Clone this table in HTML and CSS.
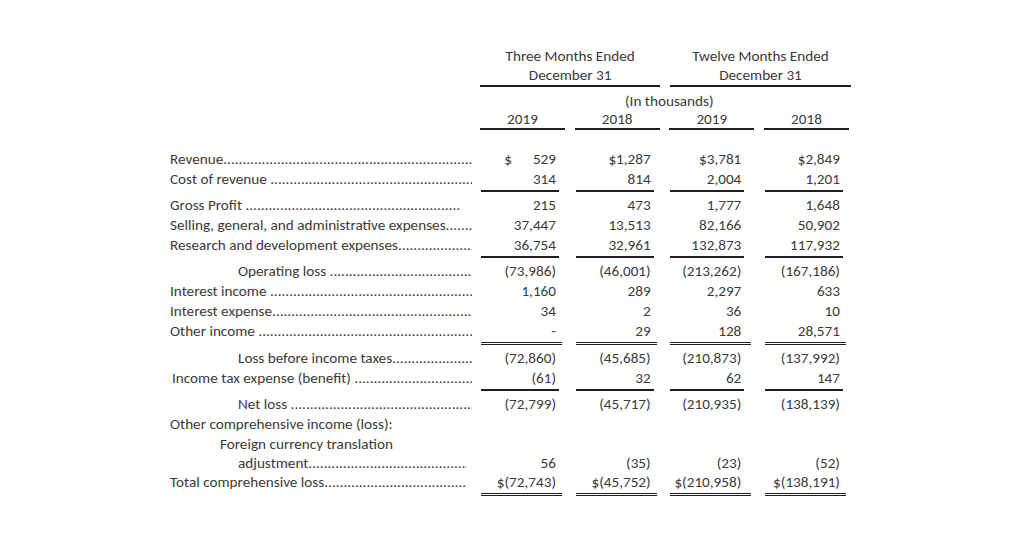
FILE: index.html
```html
<!DOCTYPE html>
<html>
<head>
<meta charset="utf-8">
<link rel="stylesheet" href="styles.css">
</head>
<body>
<div class="sheet">
  <div class="row head1">
    <div class="lab"></div>
    <div class="grp g1">Three Months Ended<br>December 31</div>
    <div class="grp g2">Twelve Months Ended<br>December 31</div>
  </div>
  <div class="row head2">
    <div class="lab"></div>
    <div class="units">(In thousands)</div>
  </div>
  <div class="row head3">
    <div class="lab"></div>
    <div class="yr">2019</div>
    <div class="yr">2018</div>
    <div class="yr">2019</div>
    <div class="yr">2018</div>
  </div>

  <div class="row first">
    <div class="lab"><span class="t">Revenue</span><span class="dots"></span></div>
    <div class="c"><span class="cur">$</span>529</div>
    <div class="c">$1,287</div>
    <div class="c">$3,781</div>
    <div class="c">$2,849</div>
  </div>
  <div class="row ul">
    <div class="lab"><span class="t">Cost of revenue&nbsp;</span><span class="dots"></span></div>
    <div class="c">314</div>
    <div class="c">814</div>
    <div class="c">2,004</div>
    <div class="c">1,201</div>
  </div>
  <div class="row">
    <div class="lab short"><span class="t">Gross Profit&nbsp;</span><span class="dots"></span></div>
    <div class="c">215</div>
    <div class="c">473</div>
    <div class="c">1,777</div>
    <div class="c">1,648</div>
  </div>
  <div class="row">
    <div class="lab"><span class="t">Selling, general, and administrative expenses</span><span class="dots"></span></div>
    <div class="c">37,447</div>
    <div class="c">13,513</div>
    <div class="c">82,166</div>
    <div class="c">50,902</div>
  </div>
  <div class="row ul">
    <div class="lab"><span class="t">Research and development expenses</span><span class="dots"></span></div>
    <div class="c">36,754</div>
    <div class="c">32,961</div>
    <div class="c">132,873</div>
    <div class="c">117,932</div>
  </div>
  <div class="row">
    <div class="lab ind"><span class="t">Operating loss&nbsp;</span><span class="dots"></span></div>
    <div class="c">(73,986)</div>
    <div class="c">(46,001)</div>
    <div class="c">(213,262)</div>
    <div class="c">(167,186)</div>
  </div>
  <div class="row">
    <div class="lab"><span class="t">Interest income&nbsp;</span><span class="dots"></span></div>
    <div class="c">1,160</div>
    <div class="c">289</div>
    <div class="c">2,297</div>
    <div class="c">633</div>
  </div>
  <div class="row">
    <div class="lab"><span class="t">Interest expense</span><span class="dots"></span></div>
    <div class="c">34</div>
    <div class="c">2</div>
    <div class="c">36</div>
    <div class="c">10</div>
  </div>
  <div class="row dbl">
    <div class="lab"><span class="t">Other income&nbsp;</span><span class="dots"></span></div>
    <div class="c">-</div>
    <div class="c">29</div>
    <div class="c">128</div>
    <div class="c">28,571</div>
  </div>
  <div class="row">
    <div class="lab ind"><span class="t">Loss before income taxes</span><span class="dots"></span></div>
    <div class="c">(72,860)</div>
    <div class="c">(45,685)</div>
    <div class="c">(210,873)</div>
    <div class="c">(137,992)</div>
  </div>
  <div class="row ul">
    <div class="lab sm"><span class="t">Income tax expense (benefit)&nbsp;</span><span class="dots"></span></div>
    <div class="c">(61)</div>
    <div class="c">32</div>
    <div class="c">62</div>
    <div class="c">147</div>
  </div>
  <div class="row">
    <div class="lab ind"><span class="t">Net loss&nbsp;</span><span class="dots"></span></div>
    <div class="c">(72,799)</div>
    <div class="c">(45,717)</div>
    <div class="c">(210,935)</div>
    <div class="c">(138,139)</div>
  </div>
  <div class="row">
    <div class="lab"><span class="t">Other comprehensive income (loss):</span></div>
  </div>
  <div class="row">
    <div class="lab ind2"><span class="t">Foreign currency translation</span></div>
  </div>
  <div class="row tight">
    <div class="lab ind short2"><span class="t">adjustment</span><span class="dots"></span></div>
    <div class="c">56</div>
    <div class="c">(35)</div>
    <div class="c">(23)</div>
    <div class="c">(52)</div>
  </div>
  <div class="row dbl tight">
    <div class="lab short2"><span class="t">Total comprehensive loss</span><span class="dots"></span></div>
    <div class="c">$(72,743)</div>
    <div class="c">$(45,752)</div>
    <div class="c">$(210,958)</div>
    <div class="c">$(138,191)</div>
  </div>
</div>
</body>
</html>
```

FILE: styles.css
```css
html, body {
  margin: 0;
  background: #ffffff;
}

body {
  font-family: Carlito, Calibri, Lato, "Liberation Sans", sans-serif;
  font-size: 15.2px;
  color: #3a3a3a;
}

.sheet {
  padding: 47px 0 0 169px;
}

.row {
  display: grid;
  grid-template-columns: 312px repeat(4, 94.67px);
  line-height: 20px;
}

/* header */
.head1 {
  line-height: 19px;
}

.grp {
  grid-column: span 2;
  text-align: center;
  border-bottom: 2px solid #1e1e1e;
}

.g1 {
  margin: 0 10px 0 -1px;
}

.g2 {
  margin: 0 9px 0 0;
}

.head2 {
  margin-top: 5px;
  line-height: 18px;
}

.units {
  grid-column: span 4;
  text-align: center;
  padding-right: 2px;
}

.head3 {
  line-height: 18px;
}

.yr {
  width: 85px;
  margin-left: -1px;
  text-align: center;
  border-bottom: 2px solid #1e1e1e;
}

.first {
  margin-top: 19px;
}

/* labels */
.lab {
  display: flex;
  padding: 0 9px 0 1px;
  white-space: nowrap;
  overflow: hidden;
}

.lab .t {
  flex: none;
}

.dots {
  flex: 1;
  overflow: hidden;
  min-width: 0;
}

.dots::after {
  content: "................................................................................................................................";
}

.lab.ind {
  padding-left: 69px;
}

.lab.ind2 {
  padding-left: 51px;
}

.lab.sm {
  padding-left: 3px;
}

.lab.short {
  padding-right: 20px;
}

.lab.short2 {
  padding-right: 14px;
}

/* numbers */
.c {
  width: 78px;
  box-sizing: border-box;
  padding-right: 3px;
  text-align: right;
  white-space: nowrap;
}

.row .c:nth-child(4) {
  width: 74px;
}

.cur {
  margin-right: 21px;
}

.row.ul .c {
  border-bottom: 2px solid #1e1e1e;
  padding-bottom: 1px;
}

.row.ul + .row {
  margin-top: 3px;
}

.row.dbl .c {
  border-bottom: 3px double #1e1e1e;
  padding-bottom: 1px;
  width: 81px;
  padding-right: 6px;
}

.row.dbl .c:nth-child(4) {
  width: 81px;
  padding-right: 10px;
}

.row.dbl + .row {
  margin-top: 3px;
}

.row.tight {
  line-height: 19px;
}
```
